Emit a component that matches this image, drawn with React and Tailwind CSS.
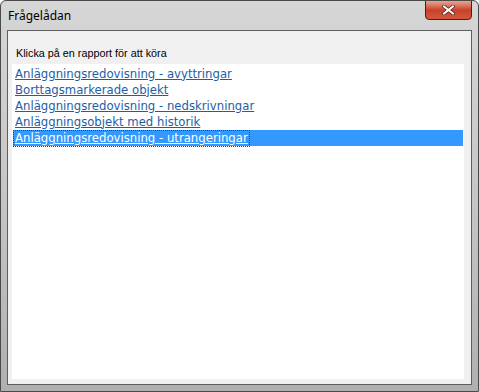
export default function App() {
  const items = [
    "Anläggningsredovisning - avyttringar",
    "Borttagsmarkerade objekt",
    "Anläggningsredovisning - nedskrivningar",
    "Anläggningsobjekt med historik",
    "Anläggningsredovisning - utrangeringar",
  ];
  return (
    <div className="w-[479px] h-[392px] flex flex-col rounded-t-[6px] border border-[#4a4a4a] bg-gradient-to-b from-[#d6d6d6] via-[#c6c6c6] to-[#b0b0b0] overflow-hidden">
      <div className="h-[29px] flex items-start relative shrink-0">
        <span className="ml-[7px] mt-[7px] text-[12px] text-black leading-[16px] font-['Noto_Sans',sans-serif]">Frågelådan</span>
        <div className="absolute right-[6px] top-[-1px] w-[47px] h-[20px] rounded-b-[4px] border border-[#5a1a12] bg-gradient-to-b from-[#e8a595] via-[#c8412a] to-[#d2583e] flex items-center justify-center">
          <svg width="13" height="10" viewBox="0 0 13 10">
            <path d="M2 1.5 L11 8.5 M11 1.5 L2 8.5" stroke="#3a1a14" strokeWidth="3.4" strokeLinecap="square" />
            <path d="M2 1.5 L11 8.5 M11 1.5 L2 8.5" stroke="#ffffff" strokeWidth="2" strokeLinecap="square" />
          </svg>
        </div>
      </div>
      <div className="flex-1 mx-[6px] mb-[6px] border border-[#5f5f5f] bg-[#f0f0f0] flex flex-col">
        <div className="h-[33px] shrink-0 flex items-end pl-[8px] pb-[4px]">
          <span className="text-[10.8px] leading-[13px] text-black font-['Liberation_Sans',sans-serif]">Klicka på en rapport för att köra</span>
        </div>
        <div className="flex-1 mx-[4px] mb-[5px] mr-[7px] bg-white pt-[2px] flex flex-col">
          {items.map((t, i) => (
            <div
              key={i}
              className={
                i === 4
                  ? "h-[16px] mx-[1px] bg-[#3399ff] flex items-center"
                  : "h-[16px] mx-[1px] flex items-center"
              }
            >
              <span
                className={
                  i === 4
                    ? "ml-[1px] px-[1px] outline outline-1 outline-dotted outline-[#1a4a80] text-white underline text-[11.7px] leading-[15px] font-['DejaVu_Sans',sans-serif]"
                    : "ml-[2px] text-[#1e5ea6] underline text-[11.7px] leading-[15px] font-['DejaVu_Sans',sans-serif]"
                }
              >
                {t}
              </span>
            </div>
          ))}
        </div>
      </div>
    </div>
  );
}
